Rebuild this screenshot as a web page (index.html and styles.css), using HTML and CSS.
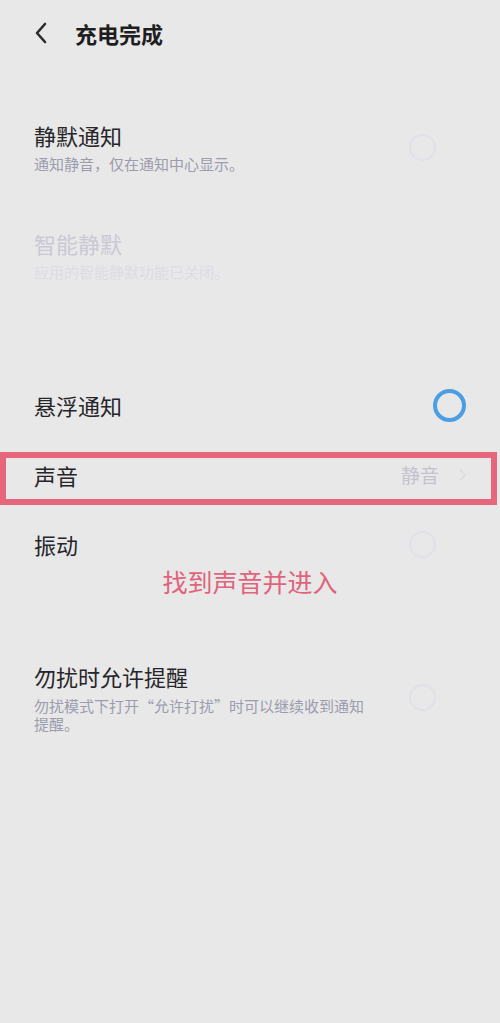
FILE: index.html
```html
<!DOCTYPE html>
<html lang="zh">
<head>
<meta charset="utf-8">
<link rel="stylesheet" href="styles.css">
</head>
<body>
<div class="page">
  <header class="header">
    <svg class="back" width="16" height="24" viewBox="0 0 16 24"><path d="M12 3 L4 12 L12 21" fill="none" stroke="#2a2a2e" stroke-width="2.6" stroke-linecap="round" stroke-linejoin="round"/></svg>
    <h1 class="title">充电完成</h1>
  </header>

  <div class="item item-first">
    <div class="text">
      <div class="name">静默通知</div>
      <div class="desc">通知静音，仅在通知中心显示。</div>
    </div>
    <span class="radio radio-grey"></span>
  </div>

  <div class="item item-second disabled">
    <div class="text">
      <div class="name">智能静默</div>
      <div class="desc">应用的智能静默功能已关闭。</div>
    </div>
  </div>

  <div class="item item-float">
    <div class="text">
      <div class="name">悬浮通知</div>
    </div>
    <span class="radio radio-blue"></span>
  </div>

  <div class="item item-sound">
    <div class="text">
      <div class="name">声音</div>
    </div>
    <span class="value">静音</span>
    <svg class="chev" width="10" height="16" viewBox="0 0 10 16"><path d="M3 3 L8 8 L3 13" fill="none" stroke="#dcdce2" stroke-width="1.6" stroke-linecap="round" stroke-linejoin="round"/></svg>
  </div>

  <div class="item item-vibrate">
    <div class="text">
      <div class="name">振动</div>
    </div>
    <span class="radio radio-grey"></span>
  </div>

  <div class="hint">找到声音并进入</div>

  <div class="item item-dnd">
    <div class="text">
      <div class="name">勿扰时允许提醒</div>
      <div class="desc desc-wrap">勿扰模式下打开“允许打扰”时可以继续收到通知提醒。</div>
    </div>
    <span class="radio radio-grey"></span>
  </div>
</div>
</body>
</html>
```

FILE: styles.css
```css
html, body {
  margin: 0;
  padding: 0;
  background: #e8e8e8;
}
body {
  font-family: "Noto Sans CJK SC", "Noto Sans", sans-serif;
  color: #232326;
}
.page {
  width: 500px;
  min-height: 1023px;
  background: #e8e8e8;
}
.header {
  height: 66px;
  display: flex;
  align-items: center;
  padding-left: 33px;
}
.back {
  display: block;
}
.title {
  margin: 0 0 0 26px;
  font-size: 22px;
  font-weight: 700;
  line-height: 30px;
  color: #1e1e22;
}
.item {
  display: flex;
  align-items: center;
  padding-left: 34px;
}
.text {
  flex: 1;
}
.name {
  font-size: 22px;
  line-height: 30px;
  color: #26262a;
}
.desc {
  margin-top: 4px;
  font-size: 15px;
  line-height: 20px;
  color: #9c9cae;
}
.desc-wrap {
  margin-top: 6px;
  line-height: 18px;
  max-width: 332px;
}
.disabled .name {
  color: #c9c9d6;
}
.disabled .desc {
  color: #dcdce4;
}
.item-first {
  margin-top: 54px;
}
.item-second {
  margin-top: 54px;
}
.item-float {
  margin-top: 108px;
  height: 30px;
}
.item-sound {
  margin-top: 32px;
  width: 497px;
  box-sizing: border-box;
  height: 53px;
  border: 6px solid #e6677c;
  padding-left: 28px;
  padding-bottom: 7px;
}
.item-vibrate {
  margin-top: 24px;
}
.item-dnd {
  margin-top: 63px;
}
.radio {
  display: block;
  flex: none;
  box-sizing: border-box;
  border-radius: 50%;
}
.radio-grey {
  width: 27px;
  height: 27px;
  border: 2px solid #e0e0e9;
  margin-right: 64px;
}
.radio-blue {
  width: 33px;
  height: 33px;
  border: 4px solid #4b9ee2;
  margin-right: 34px;
}
.value {
  font-size: 19px;
  line-height: 26px;
  color: #c3c3cf;
  margin-right: 18px;
}
.chev {
  display: block;
  margin-right: 24px;
}
.hint {
  margin-top: 5px;
  text-align: center;
  font-size: 25px;
  line-height: 34px;
  color: #e1627b;
}
```
